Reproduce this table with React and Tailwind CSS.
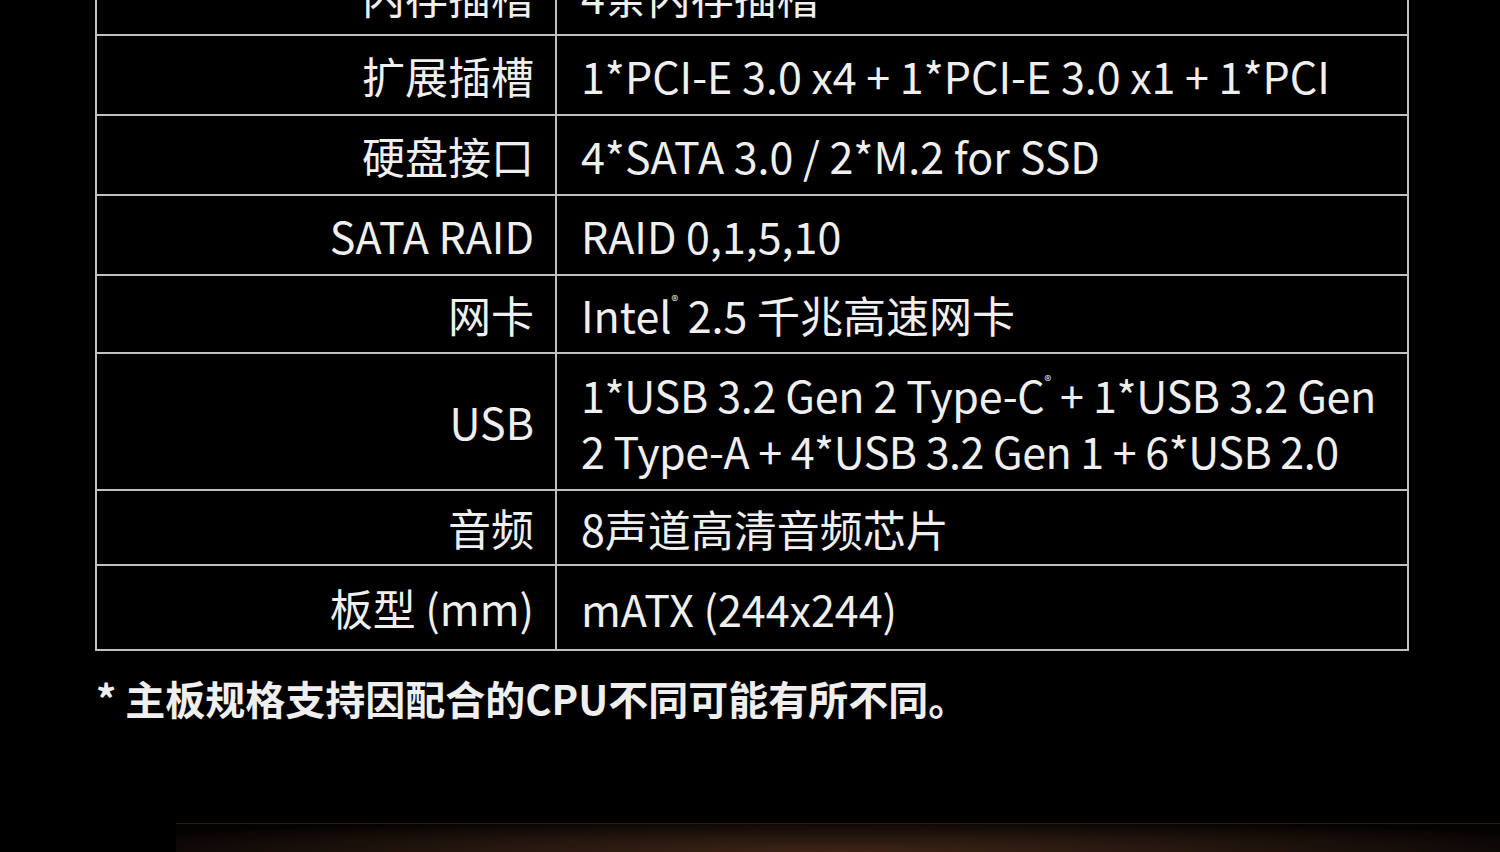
import React from 'react';

const rows = [
  { label: '内存插槽', value: '4条内存插槽', h: 'h-[80px]' },
  { label: '扩展插槽', value: '1*PCI-E 3.0 x4 + 1*PCI-E 3.0 x1 + 1*PCI', h: 'h-[80px]' },
  { label: '硬盘接口', value: '4*SATA 3.0 / 2*M.2 for SSD', h: 'h-[80px]' },
  { label: 'SATA RAID', value: 'RAID 0,1,5,10', h: 'h-[80px]' },
  {
    label: '网卡',
    value: (
      <>
        Intel<sup className="text-[14px] align-[20px]">®</sup> 2.5 千兆高速网卡
      </>
    ),
    h: 'h-[78px]',
  },
  {
    label: 'USB',
    value: (
      <>
        <span className="tracking-[-0.3px]">
          1*USB 3.2 Gen 2 Type-C<sup className="text-[14px] align-[20px]">®</sup> + 1*USB 3.2 Gen
        </span>
        <br />
        <span className="tracking-[-0.5px]">2 Type-A + 4*USB 3.2 Gen 1 + 6*USB 2.0</span>
      </>
    ),
    h: 'h-[137px]',
  },
  { label: '音频', value: '8声道高清音频芯片', h: 'h-[75px]' },
  { label: '板型 (mm)', value: 'mATX (244x244)', h: 'h-[85px]' },
];

export default function App() {
  return (
    <div
      className="relative h-[852px] w-[1500px] overflow-hidden bg-black text-[#efefef]"
      style={{ fontFamily: '"Noto Sans CJK SC", "Noto Sans", sans-serif' }}
    >
      {/* spec table, first row runs off the top edge */}
      <div className="ml-[95px] mt-[-46px] w-[1314px] border-x-2 border-b-2 border-[#c0c0c0]">
        {rows.map((r, i) => (
          <div key={i} className={`flex border-t-2 border-[#c0c0c0] ${r.h}`}>
            <div className="flex w-[460px] shrink-0 items-center justify-end border-r-2 border-[#c0c0c0] pr-[21px] text-[43px] leading-none">
              {r.label}
            </div>
            <div className="flex flex-1 items-center pl-[24px] text-[43px] leading-[56px]">
              <div>{r.value}</div>
            </div>
          </div>
        ))}
      </div>

      <p className="ml-[96px] mt-[27px] text-[40px] font-bold leading-none">
        * 主板规格支持因配合的CPU不同可能有所不同。
      </p>

      {/* top of the next section */}
      <div className="absolute bottom-0 left-[176px] right-0 h-[29px] border-t border-[#2a1a12] bg-[radial-gradient(ellipse_at_50%_100%,#3e2416_0%,#21140d_45%,#050302_85%)]" />
    </div>
  );
}
